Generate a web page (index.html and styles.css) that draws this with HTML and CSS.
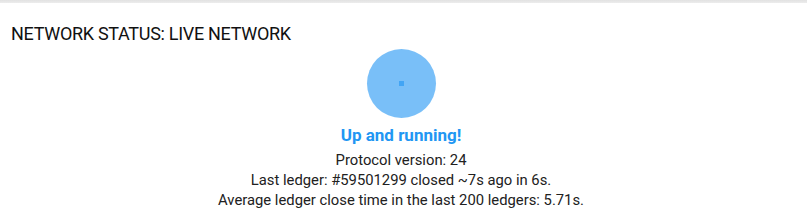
FILE: index.html
```html
<!DOCTYPE html>
<html lang="en">
<head>
  <meta charset="UTF-8">
  <title>Network Status</title>
  <link rel="stylesheet" href="styles.css">
</head>
<body>
  <div class="top-strip"></div>

  <section class="status-card">
    <h2 class="card-title">NETWORK STATUS: LIVE NETWORK</h2>

    <div class="status-body">
      <div class="pulse">
        <div class="pulse-dot"></div>
      </div>
      <div class="status-label">Up and running!</div>
      <p>Protocol version: 24</p>
      <p>Last ledger: #59501299 closed ~7s ago in 6s.</p>
      <p>Average ledger close time in the last 200 ledgers: 5.71s.</p>
    </div>
  </section>
</body>
</html>
```

FILE: styles.css
```css
* {
  margin: 0;
  padding: 0;
  box-sizing: border-box;
}
body {
  font-family: Roboto, 'Liberation Sans', sans-serif;
  background: #fff;
  color: #212121;
}
.top-strip {
  height: 3px;
  background: linear-gradient(#e2e2e2, #ececec);
}
.status-card {
  padding: 21px 16px 0 11px;
}
.card-title {
  font-size: 18px;
  font-weight: 400;
  line-height: 20px;
  letter-spacing: -0.3px;
  color: #111;
}
.status-body {
  display: flex;
  flex-direction: column;
  align-items: center;
  margin-top: 5px;
  font-size: 14.8px;
  line-height: 20px;
}
.pulse {
  width: 69px;
  height: 69px;
  border-radius: 50%;
  background: #79bff8;
  display: flex;
  align-items: center;
  justify-content: center;
}
.pulse-dot {
  width: 5px;
  height: 5px;
  background: #42a5f5;
}
.status-label {
  margin-top: 6px;
  font-size: 17px;
  font-weight: 700;
  line-height: 22px;
  color: #2196f3;
  margin-bottom: 4px;
}
```
